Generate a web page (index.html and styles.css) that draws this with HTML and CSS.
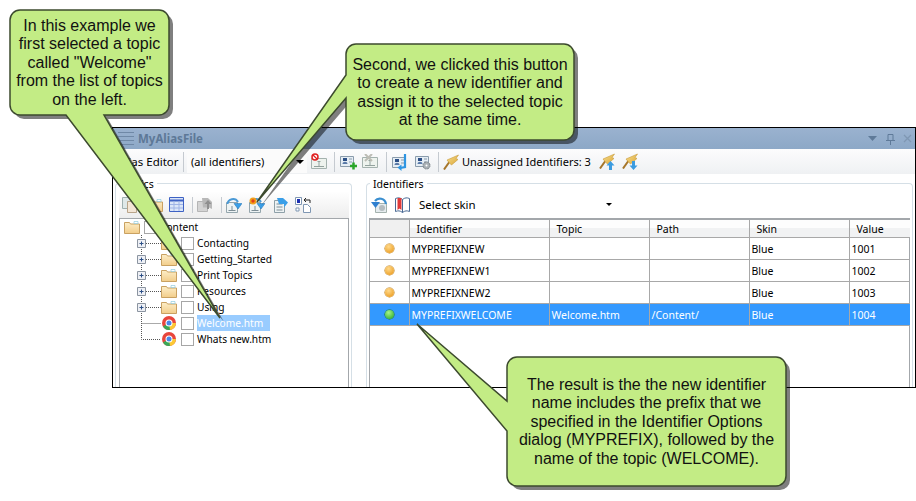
FILE: index.html
```html
<!DOCTYPE html>
<html lang="en">
<head>
    <meta charset="UTF-8">
    <meta name="viewport" content="width=device-width, initial-scale=1.0">
    <title>MyAliasFile</title>
    <link rel="stylesheet" href="styles.css">
</head>
<body>
    <svg class="defs" width="0" height="0">
        <defs>
            <linearGradient id="folderfill" x1="0" y1="0" x2="0" y2="1">
                <stop offset="0" stop-color="#fdeec8"/>
                <stop offset="1" stop-color="#f2cd8a"/>
            </linearGradient>
            <linearGradient id="goldfill" x1="0" y1="0" x2="1" y2="1">
                <stop offset="0" stop-color="#f7dc8c"/>
                <stop offset="1" stop-color="#dca93a"/>
            </linearGradient>
            <symbol id="folder" viewBox="0 0 16 16">
                <path d="M0.500 3.500h5l1 1.500h9v9.500h-15z" fill="url(#folderfill)" stroke="#c9a161"/>
                <path d="M10 2.500h4v2h-4z" fill="#fff" stroke="#7fc4d8" stroke-width="0.6"/>
            </symbol>
            <symbol id="chrome" viewBox="0 0 16 16">
                <circle cx="8" cy="8" r="7" fill="#e8453c"/>
                <path d="M8 8L2 11.500A7 7 0 0 0 10 14.700z" fill="#3aa757"/>
                <path d="M8 8L15 8A7 7 0 0 1 9 15z" fill="#fcc934"/>
                <circle cx="8" cy="8" r="3.500" fill="#fff"/>
                <circle cx="8" cy="8" r="2.500" fill="#4a86e8"/>
            </symbol>
            <symbol id="idcard" viewBox="0 0 16 16">
                <path d="M0.500 3.500h15v10h-15z" fill="#eef3ee" stroke="#a4b2ae"/>
                <path d="M3 11.500h10M8 6.500v5M6.500 6.500h3" stroke="#93a29e" fill="none"/>
            </symbol>
            <symbol id="arrowdoc" viewBox="0 0 16 16">
                <path d="M0.500 5.500h11v10h-11z" fill="#eef3f4" stroke="#95a6ad"/>
                <path d="M2.500 13.500h7M6 9v4.500" stroke="#7d8d95" fill="none"/>
                <path d="M1.500 7C2 2 9 0 12 5" stroke="#4b9ad6" stroke-width="2" fill="none"/>
                <path d="M8 6.500h8l-4 5.500z" fill="#3a9fe8" stroke="#1d6fb0" stroke-width="0.5"/>
            </symbol>
            <symbol id="flag" viewBox="0 0 16 16">
                <path d="M1 15.500L7 7" stroke="#a5752a" stroke-width="2"/>
                <path d="M4 6L15.500 1 13 4.500 15 5.500 8.500 11 6 8.500z" fill="url(#goldfill)" stroke="#c79a3a" stroke-width="0.6"/>
            </symbol>
            <symbol id="card" viewBox="0 0 16 16">
                <path d="M0.500 2.500h13v10h-13z" fill="#e6eef5" stroke="#8a9cac"/>
                <path d="M3 4h4v3H3z" fill="#2c4f86"/>
                <path d="M2.500 10c0-3 5-3 5 0z" fill="#5a7aa8"/>
                <path d="M9 5h3M9 8h3" stroke="#8a9cac"/>
            </symbol>
        </defs>
    </svg>

    <div class="win">
        <div class="titlebar">
            <svg class="grip" width="16" height="16" viewBox="0 0 16 16">
                <path d="M0 1.500h16M0 5.500h16M0 9.500h16M0 13.500h16" stroke="#6f88a6"/>
            </svg>
            <span class="wintitle">MyAliasFile</span>
            <span class="spacer"></span>
            <svg class="winbtn" width="44" height="12" viewBox="0 0 44 12">
                <path d="M0 3h9l-4.500 5z" fill="#5f7a99"/>
                <path d="M20 1.500h5v6h-5zM18 7.500h9M22.500 8v4" fill="none" stroke="#5f7a99"/>
                <path d="M36 2l7 7M43 2l-7 7" stroke="#7f97b3" stroke-width="1.300"/>
            </svg>
        </div>

        <div class="toolbar">
            <span class="tbtext editor">Alias Editor</span>
            <span class="sep"></span>
            <div class="combo">
                <span>(all identifiers)</span>
                <span class="caret"></span>
            </div>
            <svg class="ico" width="16" height="18" viewBox="0 0 16 18"><use href="#idcard" y="2" width="16" height="16"/><circle cx="4" cy="4" r="3" fill="#fff" stroke="#e02020" stroke-width="1.500"/><path d="M2 2l4 4" stroke="#e02020" stroke-width="1.300"/></svg>
            <span class="sep"></span>
            <svg class="ico" width="17" height="16" viewBox="0 0 17 16"><use href="#card" width="16" height="16"/><path d="M10 12h7M13.500 8.500v7" stroke="#2aa52a" stroke-width="2.500"/></svg>
            <svg class="ico del" width="17" height="16" viewBox="0 0 17 16"><use href="#idcard" width="16" height="16"/><path d="M3 0l7 7M10 0L3 7" stroke="#bdbdb5" stroke-width="2"/></svg>
            <span class="sep"></span>
            <svg class="ico" width="16" height="18" viewBox="0 0 16 18"><use href="#card" y="2" width="16" height="16"/><path d="M13 1v13l-5 1" fill="none" stroke="#2e95e2" stroke-width="2.200"/><path d="M5.500 14.500l4-3v6.500z" fill="#2e95e2"/></svg>
            <svg class="ico gear" width="16" height="16" viewBox="0 0 16 16"><use href="#card" width="16" height="16"/><circle cx="11.500" cy="11.500" r="3.500" fill="#a9b0b5" stroke="#7d848a" stroke-dasharray="2 0.700"/><circle cx="11.500" cy="11.500" r="1" fill="#fff"/></svg>
            <span class="sep"></span>
            <svg class="ico flagico" width="16" height="16"><use href="#flag"/></svg>
            <span class="tbtext unassigned">Unassigned Identifiers: 3</span>
            <svg class="ico flagup" width="16" height="17" viewBox="0 0 16 17"><use href="#flag" width="16" height="16"/><path d="M11.500 8l4 4.500h-2.500V17h-3v-4.500H7.500z" fill="#3b9be0"/></svg>
            <svg class="ico" width="16" height="17" viewBox="0 0 16 17"><use href="#flag" width="16" height="16"/><path d="M11.500 17l4-4.500h-2.500V8h-3v4.500H7.500z" fill="#3b9be0"/></svg>
        </div>

        <div class="panels">
            <section class="group topics">
                <span class="grouplabel">Topics</span>
                <div class="grouptools">
                    <svg class="tool t1" width="16" height="16" viewBox="0 0 16 16"><path d="M0.500 0.500h9v11h-9z" fill="#dfe8e8" stroke="#9fb0b0"/><path d="M5.500 4.500h9v11h-9z" fill="#f3e6d6" stroke="#b9a48a"/></svg>
                    <svg class="tool t2" width="16" height="16"><use href="#folder"/></svg>
                    <svg class="tool t3" width="15" height="15" viewBox="0 0 15 15"><path d="M0.500 0.500h14v14h-14z" fill="#dbe6f8" stroke="#3e62c4"/><path d="M0.500 3.500h14" stroke="#3e62c4" stroke-width="2"/><path d="M5 4v10M10 4v10M1 7.500h13M1 11h13" stroke="#9fb4e6"/></svg>
                    <span class="sep short s1"></span>
                    <svg class="tool t4" width="16" height="16" viewBox="0 0 16 16"><path d="M0.500 4.500h10v10h-10z" fill="#d4d4d4" stroke="#b5b5b5"/><path d="M5 1h6l4 4v7l-3-1.500H6z" fill="#b8b8b8"/><path d="M10 12V7H7.500l3.500-4 3.500 4H12v5z" fill="#8f8f8f"/></svg>
                    <span class="sep short s2"></span>
                    <svg class="tool t5" width="16" height="16"><use href="#arrowdoc"/></svg>
                    <svg class="tool t6" width="16" height="16"><use href="#arrowdoc"/><circle cx="4" cy="4" r="3.500" fill="#f2a11a"/><circle cx="4" cy="4" r="1.700" fill="#e2401c"/></svg>
                    <svg class="tool t7" width="16" height="16" viewBox="0 0 16 16"><path d="M1.500 3.500h10v12h-10z" fill="#eef3f4" stroke="#8ea0a8"/><path d="M3.500 7h6M3.500 10h6M3.500 13h6" stroke="#7d8d95"/><path d="M4 1h6l5 4.500-4 5V7H6z" fill="#3a9fe8"/></svg>
                    <svg class="tool t8" width="16" height="16" viewBox="0 0 16 16"><path d="M0.500 0.500h6v7h-6z" fill="#fff" stroke="#7f97b3"/><path d="M2 2h3v4H2z" fill="#1c2fb0"/><path d="M1 11h3v3H1z" fill="#fff" stroke="#7f97b3"/><path d="M8.500 7.500h4l3 3v5h-7z" fill="#fff" stroke="#7f97b3"/><path d="M9 3h6V6M9 3l2-2M9 3l2 2" stroke="#222" fill="none"/></svg>
                </div>
                <div class="tree">
                    <div class="node root">
                        <svg class="folder" width="16" height="16"><use href="#folder"/></svg>
                        <span class="check"></span>
                        <span class="nodetext">Content</span>
                    </div>
                    <div class="node">
                        <svg class="twig" width="24" height="16"><path class="dots" d="M4.500 0v16M9 8.500h15"/><path class="box" d="M0.500 4.500h8v8h-8z"/><path class="plus" d="M2.500 8.500h4M4.500 6.500v4"/></svg>
                        <svg class="folder" width="16" height="16"><use href="#folder"/></svg>
                        <span class="check"></span>
                        <span class="nodetext">Contacting</span>
                    </div>
                    <div class="node">
                        <svg class="twig" width="24" height="16"><path class="dots" d="M4.500 0v16M9 8.500h15"/><path class="box" d="M0.500 4.500h8v8h-8z"/><path class="plus" d="M2.500 8.500h4M4.500 6.500v4"/></svg>
                        <svg class="folder" width="16" height="16"><use href="#folder"/></svg>
                        <span class="check"></span>
                        <span class="nodetext">Getting_Started</span>
                    </div>
                    <div class="node">
                        <svg class="twig" width="24" height="16"><path class="dots" d="M4.500 0v16M9 8.500h15"/><path class="box" d="M0.500 4.500h8v8h-8z"/><path class="plus" d="M2.500 8.500h4M4.500 6.500v4"/></svg>
                        <svg class="folder" width="16" height="16"><use href="#folder"/></svg>
                        <span class="check"></span>
                        <span class="nodetext">Print Topics</span>
                    </div>
                    <div class="node">
                        <svg class="twig" width="24" height="16"><path class="dots" d="M4.500 0v16M9 8.500h15"/><path class="box" d="M0.500 4.500h8v8h-8z"/><path class="plus" d="M2.500 8.500h4M4.500 6.500v4"/></svg>
                        <svg class="folder" width="16" height="16"><use href="#folder"/></svg>
                        <span class="check"></span>
                        <span class="nodetext">Resources</span>
                    </div>
                    <div class="node">
                        <svg class="twig" width="24" height="16"><path class="dots" d="M4.500 0v16M9 8.500h15"/><path class="box" d="M0.500 4.500h8v8h-8z"/><path class="plus" d="M2.500 8.500h4M4.500 6.500v4"/></svg>
                        <svg class="folder" width="16" height="16"><use href="#folder"/></svg>
                        <span class="check"></span>
                        <span class="nodetext">Using</span>
                    </div>
                    <div class="node">
                        <svg class="twig" width="24" height="16"><path class="dots" d="M4.500 0v16M4.500 8.500h19"/></svg>
                        <svg class="folder" width="16" height="16"><use href="#chrome"/></svg>
                        <span class="check"></span>
                        <span class="nodetext picked">Welcome.htm</span>
                    </div>
                    <div class="node">
                        <svg class="twig" width="24" height="16"><path class="dots" d="M4.500 0v8.500h19"/></svg>
                        <svg class="folder" width="16" height="16"><use href="#chrome"/></svg>
                        <span class="check"></span>
                        <span class="nodetext">Whats new.htm</span>
                    </div>
                </div>
            </section>

            <section class="group identifiers">
                <span class="grouplabel">Identifiers</span>
                <div class="grouptools">
                    <svg class="tool" width="17" height="16" viewBox="0 0 17 16"><path d="M4.500 6.500h11v9h-11z" fill="#e6ecef" stroke="#a4b2ae"/><circle cx="11" cy="11" r="3" fill="#b4bcc0"/><path d="M15 7C14 1 7 0 4 4" stroke="#3b8fd0" stroke-width="2.200" fill="none"/><path d="M0 5h9l-4.500 6z" fill="#2e7fd0"/></svg>
                    <svg class="tool book" width="16" height="16" viewBox="0 0 16 16"><path d="M7.500 2.500C5 0.500 3 0.500 0.500 1.500v13c2.500-1 4.500-1 7 1 2.500-2 4.500-2 7-1v-13c-2.500-1-4.500-1-7 1z" fill="#fff" stroke="#4a6a95"/><path d="M2.500 1h4v12l-2-1.500-2 1.500z" fill="#e03a3a"/><path d="M7.500 2.500v13" stroke="#4a6a95"/></svg>
                    <span class="tbtext skin">Select skin</span>
                    <span class="caret skincaret"></span>
                </div>
                <div class="gridpane">
                    <table class="idtable">
                        <colgroup>
                            <col class="c0"><col class="c1"><col class="c2"><col class="c3"><col class="c4"><col class="c5">
                        </colgroup>
                        <thead>
                            <tr>
                                <th class="blank"></th><th>Identifier</th><th>Topic</th><th>Path</th><th>Skin</th><th>Value</th>
                            </tr>
                        </thead>
                        <tbody>
                            <tr>
                                <td class="mark"><span class="dot"></span></td><td>MYPREFIXNEW</td><td></td><td></td><td>Blue</td><td>1001</td>
                            </tr>
                            <tr>
                                <td class="mark"><span class="dot"></span></td><td>MYPREFIXNEW1</td><td></td><td></td><td>Blue</td><td>1002</td>
                            </tr>
                            <tr>
                                <td class="mark"><span class="dot"></span></td><td>MYPREFIXNEW2</td><td></td><td></td><td>Blue</td><td>1003</td>
                            </tr>
                            <tr class="selected">
                                <td class="mark"><span class="dot ok"></span></td><td>MYPREFIXWELCOME</td><td>Welcome.htm</td><td>/Content/</td><td>Blue</td><td>1004</td>
                            </tr>
                        </tbody>
                    </table>
                </div>
            </section>
        </div>
    </div>

    <!-- callouts sit over the screenshot -->
    <svg class="shapes" width="916" height="501" viewBox="0 0 916 501">
        <g class="shadow" transform="translate(4 4)">
            <path d="M20 10H159a10 10 0 0 1 10 10V105a10 10 0 0 1-10 10H104L220 318 66 115H20a10 10 0 0 1-10-10V20a10 10 0 0 1 10-10z"/>
            <path d="M356 44H564a10 10 0 0 1 10 10V130a10 10 0 0 1-10 10H356a10 10 0 0 1-10-10V98L257 202 346 75V54a10 10 0 0 1 10-10z"/>
            <path d="M517 357H776a10 10 0 0 1 10 10V476a10 10 0 0 1-10 10H517a10 10 0 0 1-10-10V431L417 324 507 401V367a10 10 0 0 1 10-10z"/>
        </g>
        <g class="bubble">
            <path d="M20 10H159a10 10 0 0 1 10 10V105a10 10 0 0 1-10 10H104L220 318 66 115H20a10 10 0 0 1-10-10V20a10 10 0 0 1 10-10z"/>
            <path d="M356 44H564a10 10 0 0 1 10 10V130a10 10 0 0 1-10 10H356a10 10 0 0 1-10-10V98L257 202 346 75V54a10 10 0 0 1 10-10z"/>
            <path d="M517 357H776a10 10 0 0 1 10 10V476a10 10 0 0 1-10 10H517a10 10 0 0 1-10-10V431L417 324 507 401V367a10 10 0 0 1 10-10z"/>
        </g>
    </svg>
    <p class="note note1">In this example we<br>first selected a topic<br>called "Welcome"<br>from the list of topics<br>on the left.</p>
    <p class="note note2">Second, we clicked this button<br>to create a new identifier and<br>assign it to the selected topic<br>at the same time.</p>
    <p class="note note3">The result is the the new identifier<br>name includes the prefix that we<br>specified in the Identifier Options<br>dialog (MYPREFIX), followed by the<br>name of the topic (WELCOME).</p>
</body>
</html>
```

FILE: styles.css
```css
html, body {
    margin: 0;
    height: 501px;
    overflow: hidden;
    background: #fff;
}
body {
    position: relative;
    font-family: "Noto Sans", "Liberation Sans", sans-serif;
    font-size: 10.5px;
    color: #000;
}
.defs {
    position: absolute;
}
svg {
    display: block;
    flex: none;
}

/* window */
.win {
    box-sizing: border-box;
    width: 804px;
    height: 261px;
    margin: 127px 0 0 112px;
    border: 1px solid #000;
    display: flex;
    flex-direction: column;
    background: #fff;
    overflow: hidden;
}
.titlebar {
    height: 21px;
    flex: none;
    display: flex;
    align-items: center;
    padding: 0 3px 0 5px;
    background: linear-gradient(#9ab2cf, #8da8c7);
}
.wintitle {
    margin-left: 4px;
    font-size: 11.5px;
    font-weight: bold;
    color: #5d7897;
}
.spacer {
    flex: 1;
}
.toolbar {
    height: 25px;
    flex: none;
    display: flex;
    align-items: center;
    padding-left: 5px;
    background: linear-gradient(#fcfcfd, #eff1f3);
}
.tbtext {
    font-size: 11.5px;
    white-space: nowrap;
}
.editor {
    width: 65px;
}
.sep {
    width: 1px;
    height: 20px;
    background: #c5cad0;
    flex: none;
}
.combo {
    width: 116px;
    height: 23px;
    margin: 0 1px 0 3px;
    padding-left: 4px;
    display: flex;
    align-items: center;
    justify-content: space-between;
    background: #fbfbfb;
    font-size: 11px;
}
.caret {
    width: 0;
    height: 0;
    border: 4px solid transparent;
    border-top-color: #000;
    border-bottom: 0;
}
.combo .caret {
    margin-right: 3px;
}
.ico {
    margin: 0 3px;
}
.ico + .sep {
    margin-left: 4px;
}
.sep + .ico {
    margin-left: 5px;
}
.ico.del {
    margin-left: 2px;
}
.ico.gear {
    margin-left: 4px;
}
.sep + .flagico {
    margin-left: 4px;
}
.unassigned {
    width: 134px;
    font-size: 11px;
}
.flagup {
    margin-right: 4px;
}

/* panels */
.panels {
    flex: 1;
    display: flex;
    gap: 14px;
    padding: 9px 2px 0;
    min-height: 0;
}
.group {
    box-sizing: border-box;
    display: flex;
    flex-direction: column;
    border: 1px solid #d5dfe6;
    border-bottom: 0;
    border-radius: 4px 4px 0 0;
    padding: 0 2px 0 3px;
}
.topics {
    width: 237px;
}
.identifiers {
    width: 547px;
    padding-left: 2px;
}
.grouplabel {
    align-self: flex-start;
    height: 14px;
    line-height: 14px;
    margin: -7px 0 0 1px;
    padding: 0 3px;
    background: #fff;
}
.grouptools {
    height: 27px;
    flex: none;
    display: flex;
    align-items: center;
    background: linear-gradient(#fff, #ededed);
}
.identifiers .grouptools {
    background: none;
    padding-left: 2px;
}
.tool {
    flex: none;
}
.t1 { margin-left: 3px; }
.t2 { margin-left: 9px; }
.t3 { margin-left: 6px; }
.short { height: 16px; }
.s1 { margin-left: 8px; }
.t4 { margin-left: 4px; }
.s2 { margin-left: 8px; }
.t5 { margin-left: 4px; }
.t6 { margin-left: 7px; }
.t7 { margin-left: 8px; }
.t8 { margin-left: 6px; }
.book {
    margin-left: 7px;
}
.skin {
    margin-left: 8px;
    width: 187px;
}
.skincaret {
    flex: none;
    border-width: 3px;
    border-bottom: 0;
}

/* tree */
.tree {
    flex: 1;
    border: 1px solid #a3a7ab;
    border-bottom: 0;
    min-height: 0;
}
.node {
    height: 16px;
    display: flex;
    align-items: center;
    padding-left: 17px;
    white-space: nowrap;
}
.root {
    padding-left: 4px;
}
.dots {
    fill: none;
    stroke: #555;
    stroke-dasharray: 1 1;
}
.box {
    fill: #eef0f5;
    stroke: #8b94a0;
}
.plus {
    stroke: #2c4f86;
    fill: none;
}
.check {
    box-sizing: border-box;
    width: 13px;
    height: 13px;
    margin: 0 3px 0 4px;
    border: 1px solid #a6a6a6;
    background: #fff;
    flex: none;
}
.nodetext {
    height: 16px;
    line-height: 16px;
    font-size: 10.2px;
}
.picked {
    width: 73px;
    background: #99ccff;
    color: #fff;
}

/* identifier grid */
.gridpane {
    flex: 1;
    border: 1px solid #a3a7ab;
    border-top: 2px solid #a3a7ab;
    border-bottom: 0;
    min-height: 0;
}
.idtable {
    width: 540px;
    table-layout: fixed;
    border-collapse: collapse;
    font-size: 10.5px;
}
.c0 { width: 39px; }
.c1 { width: 140px; }
.c2, .c3, .c4 { width: 100px; }
th, td {
    border: 1px solid #a8a8a8;
    padding: 0 0 0 2px;
    text-align: left;
    font-weight: normal;
    white-space: nowrap;
    overflow: hidden;
    height: 21px;
}
tr > :first-child { border-left: 0; }
tr > :last-child { border-right: 0; }
th {
    height: 17px;
    padding-left: 7px;
    border-top: 0;
    background: linear-gradient(#fdfdfd 50%, #f1f2f3 50%);
}
th.blank {
    background: #f0f0f0;
}
.mark {
    padding: 0;
}
.dot {
    display: block;
    width: 9px;
    height: 9px;
    margin: 0 auto;
    border-radius: 50%;
    background: radial-gradient(circle at 40% 30%, #ffd98a, #e8920f);
    box-shadow: 0 0 0 0.5px #b87a14;
}
.dot.ok {
    background: radial-gradient(circle at 40% 30%, #a5f58a, #1fa31f);
    box-shadow: 0 0 0 0.5px #1d7a1d;
}
.selected td {
    background: #3399ff;
    color: #fff;
}

/* callouts */
.shapes {
    position: absolute;
    left: 0;
    top: 0;
}
.shadow path {
    fill: #000;
    fill-opacity: 0.5;
}
.bubble path {
    fill: #c3ec85;
    stroke: #3c4a2e;
    stroke-width: 1.5;
}
.note {
    position: absolute;
    margin: 0;
    font-family: "Liberation Sans", Arial, sans-serif;
    font-size: 16px;
    line-height: 18.4px;
    text-align: center;
    white-space: nowrap;
    color: #111;
}
.note1 {
    left: 10px;
    top: 17px;
    width: 159px;
}
.note2 {
    left: 346px;
    top: 56px;
    width: 228px;
}
.note3 {
    left: 507px;
    top: 376px;
    width: 279px;
}
```
